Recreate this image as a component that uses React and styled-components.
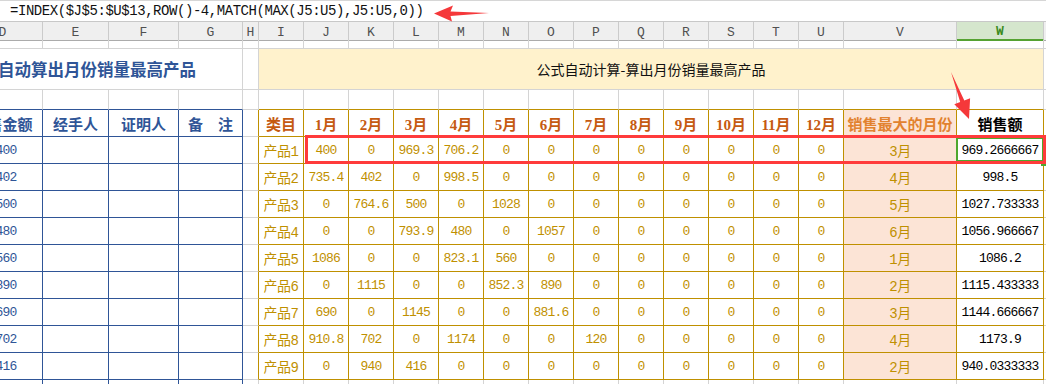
import React from 'react';
import styled, { createGlobalStyle, css } from 'styled-components';

const GRID = '#D4D4D4';
const BLUE = '#2F5597';
const GOLD = '#BF9000';
const PEACH = '#FCE4D6';
const BAND = '#FFF2CC';
const RED = '#F5383A';

const CJK = '"Noto Sans CJK SC", "Noto Sans", sans-serif';
const MONO = '"Liberation Mono", "Noto Sans CJK SC", monospace';
const SERIF = '"Liberation Serif", "Noto Sans CJK SC", serif';

// D is scrolled partly out of view, so the sheet starts at -37px
const widths = [80, 66, 70, 64, 16, ...Array(13).fill(45), 113, 87, 100];
const TEMPLATE = widths.map((w) => `${w}px`).join(' ');
const LETTERS = 'D E F G H I J K L M N O P Q R S T U V W X'.split(' ');

const products = [
	{ d: '1400', vals: ['400', '0', '969.3', '706.2', '0', '0', '0', '0', '0', '0', '0', '0'], month: '3月', total: '969.2666667' },
	{ d: '1402', vals: ['735.4', '402', '0', '998.5', '0', '0', '0', '0', '0', '0', '0', '0'], month: '4月', total: '998.5' },
	{ d: '1500', vals: ['0', '764.6', '500', '0', '1028', '0', '0', '0', '0', '0', '0', '0'], month: '5月', total: '1027.733333' },
	{ d: '1480', vals: ['0', '0', '793.9', '480', '0', '1057', '0', '0', '0', '0', '0', '0'], month: '6月', total: '1056.966667' },
	{ d: '1560', vals: ['1086', '0', '0', '823.1', '560', '0', '0', '0', '0', '0', '0', '0'], month: '1月', total: '1086.2' },
	{ d: '1890', vals: ['0', '1115', '0', '0', '852.3', '890', '0', '0', '0', '0', '0', '0'], month: '2月', total: '1115.433333' },
	{ d: '1690', vals: ['690', '0', '1145', '0', '0', '881.6', '0', '0', '0', '0', '0', '0'], month: '3月', total: '1144.666667' },
	{ d: '1702', vals: ['910.8', '702', '0', '1174', '0', '0', '120', '0', '0', '0', '0', '0'], month: '4月', total: '1173.9' },
	{ d: '1416', vals: ['0', '940', '416', '0', '0', '0', '0', '0', '0', '0', '0', '0'], month: '2月', total: '940.0333333' },
];

const zone = (i) => (i <= 3 ? 'left' : i === 4 ? 'gap' : i <= 19 ? 'right' : 'out');

// borders for a cell inside the two bordered tables
const tableBorders = (i) => {
	const z = zone(i);
	if (z === 'left') return { $r: BLUE, $b: BLUE };
	if (z === 'gap') return { $r: GOLD };
	if (z === 'right') return { $r: GOLD, $b: GOLD };
	return {};
};

const arrowPoints = (tx, ty, hx, hy, head, half, shaft) => {
	const len = Math.hypot(hx - tx, hy - ty);
	const ux = (hx - tx) / len;
	const uy = (hy - ty) / len;
	const nx = -uy;
	const ny = ux;
	const bx = hx - ux * head;
	const by = hy - uy * head;
	const pts = [
		[tx, ty],
		[bx + nx * shaft, by + ny * shaft],
		[bx + nx * half, by + ny * half],
		[hx, hy],
		[bx - nx * half, by - ny * half],
		[bx - nx * shaft, by - ny * shaft],
	];
	return pts.map((p) => p.map((v) => v.toFixed(1)).join(',')).join(' ');
};

const App = () => {
	const monthHeads = Array.from({ length: 12 }, (_, i) => `${i + 1}月`);

	return (
		<Page>
			<GlobalStyle />
			<FormulaBar>
				<FormulaText>=INDEX($J$5:$U$13,ROW()-4,MATCH(MAX(J5:U5),J5:U5,0))</FormulaText>
			</FormulaBar>
			<Sheet>
				<HeaderStrip>
					{LETTERS.map((l) => (
						<ColLetter key={l} $active={l === 'W'}>
							{l === 'X' ? '' : l}
						</ColLetter>
					))}
				</HeaderStrip>

				<SheetRow $h={9}>
					{LETTERS.map((l) => (
						<Cell key={l} />
					))}
				</SheetRow>

				<SheetRow $h={41}>
					<Cell $span={4} $kind="leftTitle">
						自动算出月份销量最高产品
					</Cell>
					<Cell />
					<Cell $span={15} $bg={BAND} $kind="band">
						公式自动计算-算出月份销量最高产品
					</Cell>
					<Cell />
				</SheetRow>

				<SheetRow $h={20}>
					{LETTERS.map((l, i) => (
						<Cell
							key={l}
							$b={zone(i) === 'left' ? BLUE : zone(i) === 'right' ? GOLD : GRID}
						/>
					))}
				</SheetRow>

				<SheetRow $h={27}>
					<Cell {...tableBorders(0)} $kind="leftHead">销售金额</Cell>
					<Cell {...tableBorders(1)} $kind="leftHead">经手人</Cell>
					<Cell {...tableBorders(2)} $kind="leftHead">证明人</Cell>
					<Cell {...tableBorders(3)} $kind="leftHead">备　注</Cell>
					<Cell {...tableBorders(4)} />
					<Cell {...tableBorders(5)} $kind="head">类目</Cell>
					{monthHeads.map((m, i) => (
						<Cell key={m} {...tableBorders(6 + i)} $kind="head">
							{m}
						</Cell>
					))}
					<Cell {...tableBorders(18)} $bg={PEACH} $kind="vHead">销售最大的月份</Cell>
					<Cell {...tableBorders(19)} $kind="wHead">销售额</Cell>
					<Cell />
				</SheetRow>

				{products.map((p, n) => (
					<SheetRow key={n} $h={27}>
						<Cell {...tableBorders(0)} $kind="leftNum">{p.d}</Cell>
						<Cell {...tableBorders(1)} />
						<Cell {...tableBorders(2)} />
						<Cell {...tableBorders(3)} />
						<Cell {...tableBorders(4)} />
						<Cell {...tableBorders(5)} $kind="prod">产品{n + 1}</Cell>
						{p.vals.map((v, i) => (
							<Cell key={i} {...tableBorders(6 + i)} $kind="num">
								{v}
							</Cell>
						))}
						<Cell {...tableBorders(18)} $bg={PEACH} $kind="month">{p.month}</Cell>
						<Cell {...tableBorders(19)} $kind="wNum">{p.total}</Cell>
						<Cell />
					</SheetRow>
				))}

				<SheetRow $h={27}>
					{LETTERS.map((l, i) => (
						<Cell key={l} {...(zone(i) === 'left' ? { $r: BLUE, $b: BLUE } : {})} />
					))}
				</SheetRow>
			</Sheet>

			<SelectBox />
			<FillHandle />
			<MarkBox />
			<Overlay width="1046" height="384" viewBox="0 0 1046 384">
				<polygon
					points="434,13.5 453,5.5 450.5,11.5 489,13 450.5,16 452,21.5"
					fill={RED}
				/>
				<polygon points={arrowPoints(951, 72, 969, 119, 19, 8.5, 2.2)} fill={RED} />
			</Overlay>
		</Page>
	);
};

export default App;

//--------CSS----------//
const GlobalStyle = createGlobalStyle`
	html, body {
		margin: 0;
		padding: 0;
		background: #ffffff;
		overflow: hidden;
	}
`;

const Page = styled.div`
	position: relative;
	width: 1046px;
	height: 384px;
	overflow: hidden;
	background: #ffffff;
	font-family: ${CJK};
`;

const FormulaBar = styled.div`
	box-sizing: border-box;
	height: 22px;
	border-top: 1px solid #d6d6d6;
	border-bottom: 1px solid #c8c8c8;
	display: flex;
	align-items: center;
	padding-left: 10px;
`;

const FormulaText = styled.span`
	font-family: ${MONO};
	font-size: 14px;
	letter-spacing: -0.45px;
	color: #111;
	white-space: nowrap;
`;

const Sheet = styled.div`
	margin-left: -37px;
`;

const HeaderStrip = styled.div`
	display: grid;
	grid-template-columns: ${TEMPLATE};
	height: 18px;
`;

const ColLetter = styled.div`
	box-sizing: border-box;
	display: flex;
	align-items: center;
	justify-content: center;
	padding-top: 2px;
	background: ${(p) => (p.$active ? '#d5e6cd' : '#efefef')};
	border-right: 1px solid #cbcbcb;
	border-bottom: ${(p) => (p.$active ? '2px solid #55a232' : '1px solid #ababab')};
	color: ${(p) => (p.$active ? '#3a8a1c' : '#505050')};
	font-family: ${MONO};
	font-size: 13px;
	font-weight: ${(p) => (p.$active ? 'bold' : 'normal')};
`;

const SheetRow = styled.div`
	display: grid;
	grid-template-columns: ${TEMPLATE};
	height: ${(p) => p.$h}px;
`;

const kinds = {
	leftTitle: css`
		justify-content: flex-start;
		padding-left: 35px;
		color: ${BLUE};
		font-size: 16.5px;
		font-weight: bold;
	`,
	leftHead: css`
		color: ${BLUE};
		font-size: 15px;
		font-weight: bold;
	`,
	leftNum: css`
		color: ${BLUE};
		font-family: ${MONO};
		font-size: 13px;
		letter-spacing: -0.8px;
	`,
	band: css`
		color: #111;
		font-size: 14px;
	`,
	head: css`
		color: #c55a11;
		font-family: ${SERIF};
		font-size: 15px;
		font-weight: bold;
	`,
	vHead: css`
		color: #e2822f;
		font-size: 15px;
		font-weight: bold;
	`,
	wHead: css`
		color: #000;
		font-size: 15px;
		font-weight: bold;
	`,
	prod: css`
		color: ${GOLD};
		font-family: ${MONO};
		font-size: 14px;
		letter-spacing: -0.4px;
	`,
	num: css`
		color: ${GOLD};
		font-family: ${MONO};
		font-size: 13px;
		letter-spacing: -0.8px;
	`,
	month: css`
		color: ${GOLD};
		font-family: ${MONO};
		font-size: 14px;
		letter-spacing: -0.4px;
	`,
	wNum: css`
		color: #000;
		font-family: ${MONO};
		font-size: 13px;
		letter-spacing: -0.8px;
	`,
};

const Cell = styled.div`
	box-sizing: border-box;
	grid-column: span ${(p) => p.$span || 1};
	display: flex;
	align-items: center;
	justify-content: center;
	overflow: hidden;
	white-space: nowrap;
	border-right: 1px solid ${(p) => p.$r || GRID};
	border-bottom: 1px solid ${(p) => p.$b || GRID};
	background: ${(p) => p.$bg || 'transparent'};
	${(p) => kinds[p.$kind]}
`;

const SelectBox = styled.div`
	position: absolute;
	left: 956px;
	top: 137px;
	width: 88px;
	height: 25px;
	box-sizing: border-box;
	border: 2px solid #4ea72e;
`;

const FillHandle = styled.div`
	position: absolute;
	left: 1041px;
	top: 161px;
	width: 5px;
	height: 5px;
	background: #4ea72e;
`;

const MarkBox = styled.div`
	position: absolute;
	left: 305px;
	top: 135px;
	width: 741px;
	height: 29px;
	box-sizing: border-box;
	border: 3px solid #ff3b3b;
`;

const Overlay = styled.svg`
	position: absolute;
	left: 0;
	top: 0;
	pointer-events: none;
`;
